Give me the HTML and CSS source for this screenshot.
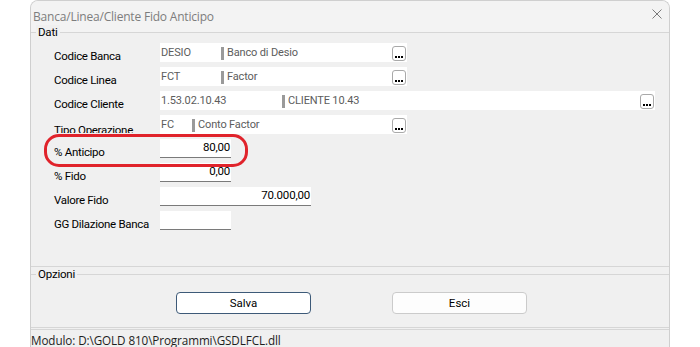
FILE: index.html
```html
<!DOCTYPE html>
<html lang="it">
<head>
<meta charset="utf-8">
<title>Banca/Linea/Cliente Fido Anticipo</title>
<link rel="stylesheet" href="styles.css">
</head>
<body>
<div class="window">
  <div class="titlebar">
    <span class="title">Banca/Linea/Cliente Fido Anticipo</span>
    <svg class="close" width="10" height="10" viewBox="0 0 10 10"><path d="M0.5 0.5L9.5 9.5M9.5 0.5L0.5 9.5" stroke="#7a7a7a" stroke-width="1" fill="none"/></svg>
  </div>

  <div class="group group-dati">
    <div class="legend">Dati</div>
    <div class="rows">
      <div class="row">
        <span class="label">Codice Banca</span>
        <div class="combo w-short">
          <span class="code c-banca">DESIO</span><span class="bar"></span><span class="desc">Banco di Desio</span>
          <span class="dots"><svg width="14" height="15" viewBox="0 0 14 15"><rect x="3" y="10" width="2" height="2"/><rect x="6" y="10" width="2" height="2"/><rect x="9" y="10" width="2" height="2"/></svg></span>
        </div>
      </div>
      <div class="row">
        <span class="label">Codice Linea</span>
        <div class="combo w-short">
          <span class="code c-banca">FCT</span><span class="bar"></span><span class="desc">Factor</span>
          <span class="dots"><svg width="14" height="15" viewBox="0 0 14 15"><rect x="3" y="10" width="2" height="2"/><rect x="6" y="10" width="2" height="2"/><rect x="9" y="10" width="2" height="2"/></svg></span>
        </div>
      </div>
      <div class="row">
        <span class="label">Codice Cliente</span>
        <div class="combo w-long">
          <span class="code c-cliente">1.53.02.10.43</span><span class="bar"></span><span class="desc">CLIENTE 10.43</span>
          <span class="dots"><svg width="14" height="15" viewBox="0 0 14 15"><rect x="3" y="10" width="2" height="2"/><rect x="6" y="10" width="2" height="2"/><rect x="9" y="10" width="2" height="2"/></svg></span>
        </div>
      </div>
      <div class="row">
        <span class="label clipped">Tipo Operazione</span>
        <div class="combo w-short">
          <span class="code c-tipo">FC</span><span class="bar"></span><span class="desc">Conto Factor</span>
          <span class="dots"><svg width="14" height="15" viewBox="0 0 14 15"><rect x="3" y="10" width="2" height="2"/><rect x="6" y="10" width="2" height="2"/><rect x="9" y="10" width="2" height="2"/></svg></span>
        </div>
      </div>
      <div class="row">
        <span class="label">% Anticipo</span>
        <div class="num w-num">80,00</div>
      </div>
      <div class="row">
        <span class="label">% Fido</span>
        <div class="num w-num">0,00</div>
      </div>
      <div class="row">
        <span class="label">Valore Fido</span>
        <div class="num w-val">70.000,00</div>
      </div>
      <div class="row">
        <span class="label">GG Dilazione Banca</span>
        <div class="num w-num"></div>
      </div>
    </div>
    <div class="annotation"></div>
  </div>

  <div class="group group-opz">
    <div class="legend">Opzioni</div>
    <div class="buttons">
      <button class="btn btn-default">Salva</button>
      <button class="btn">Esci</button>
    </div>
  </div>

  <div class="status">Modulo: D:\GOLD 810\Programmi\GSDLFCL.dll</div>
</div>
</body>
</html>
```

FILE: styles.css
```css
* { box-sizing: border-box; }
html, body { margin: 0; padding: 0; background: #ffffff; }
body {
  font-family: Roboto, "Liberation Sans", sans-serif;
  font-size: 12px;
  color: #000;
}
.window {
  margin-left: 30px;
  width: 640px;
  height: 347px;
  background: #f0f0f0;
  border: 1px solid #cfcfcf;
  border-bottom: none;
  border-radius: 8px 8px 0 0;
  position: relative;
  overflow: hidden;
}
.titlebar {
  height: 31px;
  background: #f3f3f3;
  display: flex;
  align-items: center;
  justify-content: space-between;
  padding: 0 7px 1px 2px;
}
.title {
  font-family: "Open Sans", "Noto Sans", sans-serif;
  font-size: 12px;
  color: #7d7d7d;
  letter-spacing: -0.2px;
}
.close { display: block; margin-bottom: 4px; }

.group {
  border-top: 1px solid #d6d6d6;
  border-bottom: 1px solid #d6d6d6;
  position: relative;
}
.legend {
  width: max-content;
  margin: -8px 0 0 5px;
  padding: 0 2px;
  height: 14px;
  line-height: 14px;
  background: #f0f0f0;
  font-size: 11.5px;
  letter-spacing: -0.2px;
}
.group-dati { padding-bottom: 36px; }
.rows {
  margin-top: 4px;
  display: flex;
  flex-direction: column;
  gap: 5px;
}
.row {
  display: grid;
  grid-template-columns: 129px auto;
  height: 19px;
}
.label {
  padding-left: 23px;
  padding-top: 6px;
  line-height: 14px;
  font-size: 11.5px;
  letter-spacing: -0.3px;
  white-space: nowrap;
}
.label.clipped { height: 18px; overflow: hidden; padding-top: 8px; }

.combo {
  height: 19px;
  background: #fff;
  display: flex;
  align-items: center;
  color: #5c5c5c;
  font-size: 11px;
  letter-spacing: -0.15px;
}
.w-short { width: 247px; }
.w-long { width: 495px; }
.code { padding-left: 1px; white-space: nowrap; }
.c-banca { width: 61px; }
.c-cliente { width: 122px; }
.c-tipo { width: 32px; }
.bar {
  width: 3px;
  height: 13px;
  background: #9a9a9a;
  margin-top: 1px;
}
.desc { padding-left: 3px; flex: 1; white-space: nowrap; }
.dots {
  width: 14px;
  height: 15px;
  background: #fff;
  border: 1px solid #a9a9a9;
  border-radius: 3px;
  margin: 1px 1px 0 0;
  display: flex;
}
.dots svg { display: block; margin: -1px; fill: #000; }

.num {
  height: 19px;
  background: #fff;
  border-bottom: 1px solid #7a7a7a;
  text-align: right;
  padding-right: 1px;
  line-height: 16px;
  font-size: 11.5px;
  letter-spacing: -0.2px;
  color: #000;
}
.w-num { width: 71px; }
.w-val { width: 151px; }

.annotation {
  position: absolute;
  left: 13px;
  top: 101px;
  width: 204px;
  height: 33px;
  border: 3.5px solid #e0232b;
  border-radius: 15px;
}

.group-opz {
  margin-top: 7px;
  padding-bottom: 13px;
}
.buttons {
  margin-top: 11px;
  display: flex;
  gap: 81px;
  padding-left: 145px;
}
.btn {
  width: 135px;
  height: 22px;
  background: #fdfdfd;
  border: 1px solid #cbcbcb;
  border-radius: 4px;
  font-family: inherit;
  font-size: 11.5px;
  color: #000;
  padding: 0;
}
.btn-default {
  border-color: #3d5a78;
  background: #fff;
}

.status {
  margin-top: 1px;
  border-top: 1px solid #d6d6d6;
  padding-top: 2px;
  font-family: "Open Sans", "Noto Sans", sans-serif;
  font-size: 11.7px;
  color: #1e1e1e;
  letter-spacing: -0.1px;
  white-space: nowrap;
}
```
